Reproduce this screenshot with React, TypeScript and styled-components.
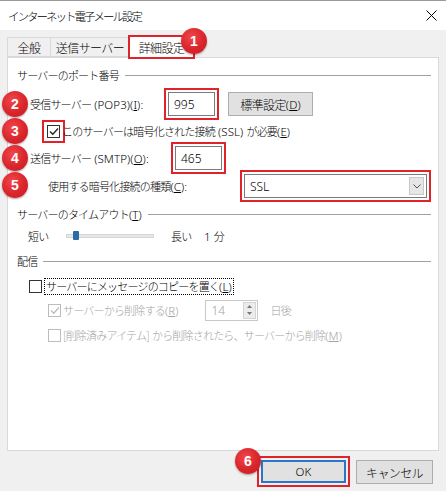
import React from 'react';
import styled, { createGlobalStyle } from 'styled-components';

const GlobalStyle = createGlobalStyle`
  html, body { margin: 0; padding: 0; }
  body { background: #f0f0f0; font-family: "Noto Sans CJK JP", "Noto Sans", sans-serif; }
`;

const RED = '#e0232b';

const Window = styled.div`
  position: relative;
  width: 446px;
  height: 491px;
  box-sizing: border-box;
  background: #f0f0f0;
  border-top: 1px solid #9a9a9a;
  display: flex;
  flex-direction: column;
  overflow: hidden;
  font-family: "Noto Sans CJK JP", "Noto Sans", sans-serif;
  font-weight: 300;
  font-size: 11px;
  letter-spacing: -0.8px;
  color: #000;
`;

const Lat = styled.span`
  font-family: "Noto Sans", "Liberation Sans", sans-serif;
  font-size: 11.5px;
  letter-spacing: 0.1px;
  font-weight: 300;
`;

const TitleBar = styled.div`
  height: 29px;
  background: #fff;
  display: flex;
  align-items: center;
  justify-content: space-between;
  padding: 0 8px;
  font-size: 11.5px;
  letter-spacing: -2px;
`;

const CloseIcon = styled.svg`
  width: 11px;
  height: 11px;
  margin-right: 1px;
`;

const TabStrip = styled.div`
  height: 27px;
  display: flex;
  align-items: flex-end;
  padding: 0 7px;
  position: relative;
  z-index: 2;
`;

const Tab = styled.div<{ $w: number; $active?: boolean }>`
  position: relative;
  box-sizing: border-box;
  width: ${p => p.$w}px;
  height: ${p => (p.$active ? 22 : 20)}px;
  margin-bottom: ${p => (p.$active ? -1 : 0)}px;
  display: flex;
  align-items: center;
  justify-content: center;
  font-size: 12px;
  letter-spacing: -0.6px;
  background: ${p => (p.$active ? '#fff' : '#f0f0f0')};
  border: 1px solid #d9d9d9;
  border-bottom: ${p => (p.$active ? 'none' : '1px solid #d9d9d9')};
  outline: ${p => (p.$active ? `2px solid ${RED}` : 'none')};
  outline-offset: -1px;
  & + & { margin-left: -1px; }
`;

const Panel = styled.div`
  position: relative;
  margin: 0 7px;
  height: 394px;
  box-sizing: border-box;
  background: #fff;
  border: 1px solid #d9d9d9;
  padding: 9px 7px 0 9px;
  display: flex;
  flex-direction: column;
`;

const Heading = styled.div<{ $mt: number }>`
  margin-top: ${p => p.$mt}px;
  height: 16px;
  display: flex;
  align-items: center;
  gap: 6px;
  white-space: nowrap;
  &::after {
    content: '';
    flex: 1;
    height: 1px;
    background: #a0a0a0;
  }
`;

const Row = styled.div<{ $mt: number; $h: number; $indent: number; $disabled?: boolean }>`
  position: relative;
  margin-top: ${p => p.$mt}px;
  height: ${p => p.$h}px;
  padding-left: ${p => p.$indent}px;
  display: flex;
  align-items: center;
  white-space: nowrap;
  color: ${p => (p.$disabled ? '#a3a3a3' : '#000')};
`;

const Label = styled.span<{ $w?: number }>`
  display: inline-block;
  width: ${p => (p.$w ? `${p.$w}px` : 'auto')};
  flex-shrink: 0;
`;

const TextBox = styled.div<{ $w: number; $hl?: boolean }>`
  box-sizing: border-box;
  width: ${p => p.$w}px;
  height: 24px;
  border: 1px solid #7a7a7a;
  background: #fff;
  display: flex;
  align-items: center;
  padding-left: 5px;
  font-size: 12px;
  letter-spacing: 0;
  font-weight: 300;
  font-family: "Noto Sans", "Liberation Sans", sans-serif;
  outline: ${p => (p.$hl ? `2px solid ${RED}` : 'none')};
  outline-offset: 2px;
`;

const Button = styled.div<{ $w: number; $default?: boolean; $hl?: boolean }>`
  position: relative;
  box-sizing: border-box;
  width: ${p => p.$w}px;
  height: ${p => (p.$default ? 23 : 24)}px;
  background: #e1e1e1;
  border: ${p => (p.$default ? '2px solid #2b76c7' : '1px solid #adadad')};
  display: flex;
  align-items: center;
  justify-content: center;
  font-size: 12px;
  letter-spacing: -0.6px;
  flex-shrink: 0;
  outline: ${p => (p.$hl ? `2px solid ${RED}` : 'none')};
  outline-offset: 2px;
`;

const Check = styled.span<{ $disabled?: boolean; $hl?: boolean }>`
  box-sizing: border-box;
  width: 13px;
  height: 13px;
  flex-shrink: 0;
  background: #fff;
  border: 1px solid ${p => (p.$disabled ? '#bcbcbc' : '#333')};
  display: inline-flex;
  align-items: center;
  justify-content: center;
  margin-right: 2px;
  outline: ${p => (p.$hl ? `2px solid ${RED}` : 'none')};
  outline-offset: 3px;
`;

const Focus = styled.span`
  padding: 0 1px;
  border: 1px dotted #000;
  line-height: 14px;
`;

const Select = styled.div`
  box-sizing: border-box;
  width: 183px;
  height: 24px;
  border: 1px solid #7a7a7a;
  background: #fff;
  display: flex;
  align-items: center;
  justify-content: space-between;
  padding: 0 2px 0 5px;
  font-size: 12px;
  letter-spacing: 0;
  font-weight: 300;
  font-family: "Noto Sans", "Liberation Sans", sans-serif;
  outline: 2px solid ${RED};
  outline-offset: 2px;
`;

const DropBtn = styled.span`
  box-sizing: border-box;
  width: 15px;
  height: 18px;
  background: #e6e6e6;
  border: 1px solid #c8c8c8;
  display: flex;
  align-items: center;
  justify-content: center;
`;

const Track = styled.div`
  position: relative;
  box-sizing: border-box;
  width: 88px;
  height: 4px;
  background: #e7e7e7;
  border: 1px solid #d6d6d6;
  margin-right: 17px;
`;

const Thumb = styled.span`
  position: absolute;
  left: 6px;
  top: -4px;
  width: 6px;
  height: 9px;
  background: #2c6ba3;
  border-radius: 1px;
`;

const Spinner = styled.div`
  box-sizing: border-box;
  width: 53px;
  height: 21px;
  border: 1px solid #c9c9c9;
  background: #fff;
  display: flex;
  align-items: center;
  justify-content: space-between;
  padding: 1px 1px 1px 6px;
  margin-left: 26px;
  margin-right: 13px;
  font-size: 12px;
  letter-spacing: 0;
  font-weight: 300;
  color: #a3a3a3;
  font-family: "Noto Sans", "Liberation Sans", sans-serif;
`;

const SpinBtns = styled.span`
  width: 13px;
  height: 17px;
  background: #ececec;
  border: 1px solid #d4d4d4;
  box-sizing: border-box;
  display: flex;
  flex-direction: column;
  align-items: center;
  justify-content: space-around;
`;

const Footer = styled.div`
  display: flex;
  justify-content: flex-end;
  gap: 10px;
  padding: 9px 13px 0 0;
`;

const Badge = styled.span<{ $x: number; $y: number }>`
  position: absolute;
  left: ${p => p.$x}px;
  top: ${p => p.$y}px;
  width: 26px;
  height: 26px;
  border-radius: 50%;
  background: radial-gradient(circle at 40% 35%, #f0474a 0%, #d9252b 55%, #c41c22 100%);
  box-shadow: 0 1px 2px rgba(0, 0, 0, 0.35);
  color: #fff;
  display: flex;
  align-items: center;
  justify-content: center;
  font-family: "Liberation Sans", Arial, sans-serif;
  font-weight: bold;
  font-size: 14px;
  letter-spacing: 0;
  z-index: 5;
`;

const CheckMark: React.FC<{ color: string }> = ({ color }) => (
  <svg width="10" height="9" viewBox="0 0 10 9">
    <path d="M1 4.5 L3.8 7.3 L9 1.5" fill="none" stroke={color} strokeWidth="1.3" />
  </svg>
);

export default function App() {
  return (
    <>
      <GlobalStyle />
      <Window>
        <TitleBar>
          <span>インターネット電子メール設定</span>
          <CloseIcon viewBox="0 0 11 11">
            <path d="M0.5 0.5 L10.5 10.5 M10.5 0.5 L0.5 10.5" stroke="#000" strokeWidth="1" />
          </CloseIcon>
        </TitleBar>
        <TabStrip>
          <Tab $w={44}>全般</Tab>
          <Tab $w={80}>送信サーバー</Tab>
          <Tab $w={65} $active>
            詳細設定
            <Badge $x={51} $y={-9}>1</Badge>
          </Tab>
        </TabStrip>
        <Panel>
          <Heading $mt={0}>サーバーのポート番号</Heading>
          <Row $mt={9} $h={24} $indent={13}>
            <Badge $x={-15} $y={-1}>2</Badge>
            <Label $w={138}>受信サーバー<Lat> (POP3)(<u>I</u>):</Lat></Label>
            <TextBox $w={47} $hl>995</TextBox>
            <span style={{ width: 13 }} />
            <Button $w={85}>標準設定<Lat>(<u>D</u>)</Lat></Button>
          </Row>
          <Row $mt={5} $h={20} $indent={30}>
            <Badge $x={-15} $y={-3}>3</Badge>
            <Check $hl>
              <CheckMark color="#222" />
            </Check>
            <span>このサーバーは暗号化された接続<Lat> (SSL) </Lat>が必要<Lat>(<u>E</u>)</Lat></span>
          </Row>
          <Row $mt={5} $h={24} $indent={13}>
            <Badge $x={-15} $y={-1}>4</Badge>
            <Label $w={145}>送信サーバー<Lat> (SMTP)(<u>O</u>):</Lat></Label>
            <TextBox $w={47} $hl>465</TextBox>
          </Row>
          <Row $mt={4} $h={24} $indent={31}>
            <Badge $x={-15} $y={-2}>5</Badge>
            <Label $w={196}>使用する暗号化接続の種類<Lat>(<u>C</u>):</Lat></Label>
            <Select>
              <span>SSL</span>
              <DropBtn>
                <svg width="8" height="5" viewBox="0 0 8 5">
                  <path d="M0.5 0.5 L4 4 L7.5 0.5" fill="none" stroke="#555" strokeWidth="1" />
                </svg>
              </DropBtn>
            </Select>
          </Row>
          <Heading $mt={8}>
            <span>サーバーのタイムアウト<Lat>(<u>T</u>)</Lat></span>
          </Heading>
          <Row $mt={6} $h={16} $indent={11}>
            <Label $w={38}>短い</Label>
            <Track>
              <Thumb />
            </Track>
            <Label $w={33}>長い</Label>
            <span><Lat>1 </Lat>分</span>
          </Row>
          <Heading $mt={9}>配信</Heading>
          <Row $mt={9} $h={16} $indent={12}>
            <Check />
            <Focus>サーバーにメッセージのコピーを置く<Lat>(<u>L</u>)</Lat></Focus>
          </Row>
          <Row $mt={5} $h={22} $indent={31} $disabled>
            <Check $disabled>
              <CheckMark color="#bcbcbc" />
            </Check>
            <span>サーバーから削除する<Lat>(<u>R</u>)</Lat></span>
            <Spinner>
              <span>14</span>
              <SpinBtns>
                <svg width="5" height="3" viewBox="0 0 5 3"><path d="M0 3 L2.5 0 L5 3 Z" fill="#777" /></svg>
                <svg width="5" height="3" viewBox="0 0 5 3"><path d="M0 0 L2.5 3 L5 0 Z" fill="#777" /></svg>
              </SpinBtns>
            </Spinner>
            <span>日後</span>
          </Row>
          <Row $mt={6} $h={16} $indent={31} $disabled>
            <Check $disabled />
            <span>[削除済みアイテム]<Lat> </Lat>から削除されたら、サーバーから削除<Lat>(<u>M</u>)</Lat></span>
          </Row>
        </Panel>
        <Footer>
          <Button $w={85} $default $hl>
            <Lat>OK</Lat>
            <Badge $x={-28} $y={-14}>6</Badge>
          </Button>
          <Button $w={77}>キャンセル</Button>
        </Footer>
      </Window>
    </>
  );
}
